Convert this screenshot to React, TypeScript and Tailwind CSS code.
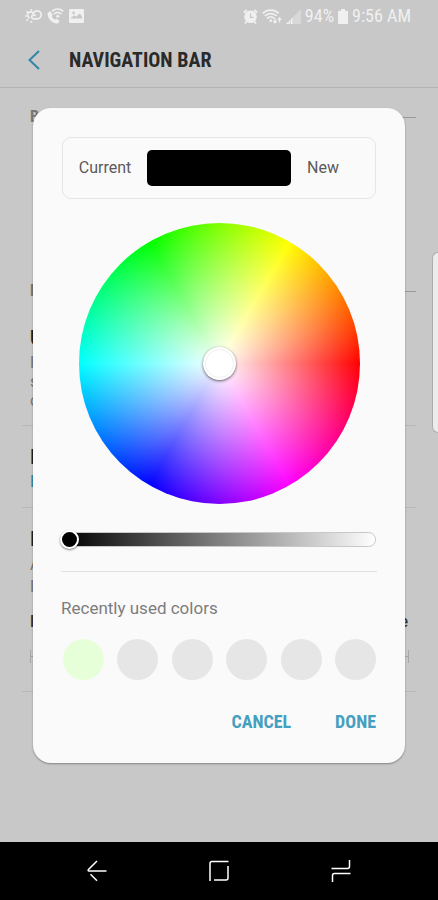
import React, { useState } from 'react';

const RECENT_COLORS = ['#e6ffd9', '#e6e6e6', '#e6e6e6', '#e6e6e6', '#e6e6e6', '#e6e6e6'];

function WeatherIcon() {
  return (
    <svg width="17" height="14" viewBox="0 0 17 14" fill="none" stroke="currentColor" strokeWidth="1.7" aria-hidden="true">
      <path d="M8.4 4.6A3.1 3.1 0 1 0 4.8 9" />
      <path d="M8.2 5.4A4 4 0 1 1 12.2 9.8H8.6A2 2 0 1 1 10.6 7.2" />
      <path d="M6.3 0v1.8M6.3 12v1.8M0 7h1.6M1.5 2.3l1.4 1.3M1.5 11.7l1.4-1.3" />
    </svg>
  );
}

function WifiCallIcon() {
  return (
    <svg width="17" height="16" viewBox="0 0 17 16" fill="none" stroke="currentColor" strokeWidth="1.7" aria-hidden="true">
      <path d="M.6 5L3 3.3l2.900 3.300-1.200 1.700c.8 1.800 1.800 2.700 3.300 3.500l1.800-1.100 2.900 2.600-2 2.200C6 15.900.1 10.800.6 5z" fill="currentColor" stroke="none" />
      <path d="M5 3.4C8.5.4 13 .4 16.3 3.4M7 6c2.200-2 5.200-2 7.400 0" />
      <circle cx="10.7" cy="8.200" r="1.5" fill="currentColor" stroke="none" />
    </svg>
  );
}

function ImageIcon() {
  return (
    <svg width="15" height="14" viewBox="0 0 15 14" fill="currentColor" fillRule="evenodd" aria-hidden="true">
      <path d="M1.300 0h12.400A1.300 1.300 0 0 1 15 1.300v11.400a1.300 1.300 0 0 1-1.300 1.300H1.300A1.300 1.300 0 0 1 0 12.700V1.300A1.300 1.300 0 0 1 1.300 0zM2 9.500h11V7L10.400 4.500 7.300 7.800 5.200 6.200 2 8.800zM4.600 2.600a1.300 1.300 0 1 0 0 2.600 1.300 1.300 0 0 0 0-2.600z" />
    </svg>
  );
}

function AlarmIcon() {
  return (
    <svg width="15" height="15" viewBox="0 0 15 15" fill="none" stroke="currentColor" aria-hidden="true">
      <circle cx="7.5" cy="7.8" r="6.3" fill="currentColor" stroke="none" />
      <path d="M.8 3.5L3.8 1M14.200 3.5L11.2 1M3.5 12.5L2 14.5M11.5 12.5l1.5 2" strokeWidth="1.800" />
      <path d="M7.5 4.5v3.800H10.500" stroke="#c8c8c8" strokeWidth="1.2" />
    </svg>
  );
}

function WifiIcon() {
  return (
    <svg width="20" height="15" viewBox="0 0 20 15" fill="none" stroke="currentColor" strokeWidth="1.700" aria-hidden="true">
      <path d="M.7 4.3c4.6-4.2 11.4-4.2 16 0M2.800 7c3.400-3.200 8.400-3.200 11.800 0M5 9.500c2.200-2 5.200-2 7.400 0" />
      <circle cx="8.700" cy="11.700" r="1.400" fill="currentColor" stroke="none" />
      <path d="M13 9.500v4.500M11.300 12l1.700 1.900 1.700-1.900M17.500 13.500V9M15.800 10.900l1.700-1.900 1.700 1.900" strokeWidth="1.300" />
    </svg>
  );
}

function SignalIcon() {
  return (
    <svg width="15" height="15" viewBox="0 0 15 15" fill="currentColor" aria-hidden="true">
      <path d="M15 0v15H0z" opacity=".4" />
      <path d="M2.500 12.500V15H0zM4 11v4h-1V12zM6.500 8.500V15H5V10z" />
    </svg>
  );
}

function BatteryIcon() {
  return (
    <svg width="10" height="15" viewBox="0 0 10 15" fill="currentColor" aria-hidden="true">
      <path d="M3 0h4v1.800h2a1 1 0 0 1 1 1V14a1 1 0 0 1-1 1H1a1 1 0 0 1-1-1V2.800a1 1 0 0 1 1-1h2z" />
    </svg>
  );
}

function StatusBar() {
  return (
    <div className="flex h-8 items-center justify-between pr-[27px] pl-[25px] font-['Roboto_Condensed',Roboto,sans-serif] text-lg text-[#f0f0f0]">
      <div className="flex items-center gap-[5px]">
        <WeatherIcon />
        <WifiCallIcon />
        <ImageIcon />
      </div>
      <div className="flex items-center gap-1">
        <AlarmIcon />
        <WifiIcon />
        <SignalIcon />
        <span>94%</span>
        <BatteryIcon />
        <span>9:56 AM</span>
      </div>
    </div>
  );
}

function SectionLabel({ children }: { children: React.ReactNode }) {
  return (
    <div className="flex items-center gap-2 pl-2 font-['Roboto_Condensed',Roboto,sans-serif] text-base leading-5 font-bold text-[#777777]">
      <span>{children}</span>
      <div className="h-px flex-1 bg-[#999999]" />
    </div>
  );
}

function SettingTitle({ children }: { children: React.ReactNode }) {
  return <h2 className="mb-px text-xl leading-7 font-bold text-[#222222]">{children}</h2>;
}

function Settings() {
  return (
    <main className="flex-1 px-[22px] pt-[19px]">
      <SectionLabel>B</SectionLabel>
      <div className="h-[154px]" />
      <SectionLabel>B</SectionLabel>

      <section className="border-b border-[#b8b8b8] pt-[23px] pb-[15px] pl-2">
        <SettingTitle>U</SettingTitle>
        <p className="w-3 text-base leading-[19px] text-[#777777]">H<br />s<br />c</p>
      </section>

      <section className="border-b border-[#b8b8b8] pt-[17px] pb-4 pl-2">
        <SettingTitle>I</SettingTitle>
        <p className="text-base leading-[19px] text-[#2f86a6]">E</p>
      </section>

      <section className="border-b border-[#b8b8b8] pt-[17px] pb-7 pl-2">
        <SettingTitle>I</SettingTitle>
        <p className="w-3 text-base leading-[22px] text-[#777777]">A<br />P</p>
        <div className="mt-[14px] flex justify-between pr-2 text-base leading-5 font-medium text-[#333333]">
          <span>N</span>
          <span>e</span>
        </div>
        <div className="mt-[18px] mr-[7px] flex h-[13px] items-center border-x border-[#a8a8a8]">
          <div className="h-px flex-1 bg-[#a8a8a8]" />
        </div>
      </section>
    </main>
  );
}

function ColorDialog() {
  const [level, setLevel] = useState(0);

  return (
    <div
      role="dialog"
      aria-label="Color picker"
      className="absolute inset-x-[33px] top-[108px] rounded-[18px] bg-[#fafafa] px-[29px] pt-[29px] pb-[29px] shadow-[0_1px_2px_rgba(0,0,0,0.35)]"
    >
      <div className="grid h-[62px] grid-cols-[84px_1fr_84px] items-center rounded-[9px] border border-[#e6e6e6] text-base text-[#5a5a5a]">
        <span className="text-center">Current</span>
        <div className="grid h-9 grid-cols-2 overflow-hidden rounded-[5px]">
          <div className="bg-black" />
          <div className="bg-black" />
        </div>
        <span className="pl-4">New</span>
      </div>

      {/* Hue runs counter-clockwise from red, saturation from the centre out */}
      <div className="mx-auto mt-6 flex aspect-square w-[281px] items-center justify-center rounded-full bg-[radial-gradient(closest-side,#fff,rgba(255,255,255,0)),conic-gradient(from_90deg,#f00,#f0f,#00f,#0ff,#0f0,#ff0,#f00)]">
        <button
          type="button"
          aria-label="Hue and saturation"
          className="flex size-[33px] items-center justify-center rounded-full bg-white shadow-[0_1px_3px_rgba(0,0,0,0.6)]"
        >
          <span className="size-[29px] rounded-full border border-[#f0f0f0]" />
        </button>
      </div>

      <div className="mt-[25px] flex h-5 items-center">
        <input
          type="range"
          aria-label="Brightness"
          min={0}
          max={100}
          value={level}
          onChange={(e) => setLevel(Number(e.target.value))}
          className="h-[15px] w-full appearance-none rounded-full border border-[#c8c8c8] bg-[linear-gradient(to_right,#000,#fff)] bg-origin-border [&::-webkit-slider-thumb]:-ml-[3px] [&::-webkit-slider-thumb]:size-[19px] [&::-webkit-slider-thumb]:appearance-none [&::-webkit-slider-thumb]:rounded-full [&::-webkit-slider-thumb]:border-2 [&::-webkit-slider-thumb]:border-white [&::-webkit-slider-thumb]:bg-black [&::-webkit-slider-thumb]:shadow-[0_1px_2px_rgba(0,0,0,0.5)]"
        />
      </div>

      <div className="-mx-px mt-[22px] h-px bg-[#e0e0e0]" />

      <h3 className="-mx-px mt-6 text-[17px] leading-6 text-[#7d7d7d]">Recently used colors</h3>
      <div className="mt-[19px] flex justify-between pl-px">
        {RECENT_COLORS.map((color, i) => (
          <button
            key={i}
            type="button"
            aria-label={`Recent color ${i + 1}`}
            className="size-[41px] rounded-full"
            style={{ backgroundColor: color }}
          />
        ))}
      </div>

      <div className="mt-[30px] flex justify-end gap-11 font-['Roboto_Condensed',Roboto,sans-serif] text-lg leading-6 font-bold text-[#459fbf]">
        <button type="button">CANCEL</button>
        <button type="button">DONE</button>
      </div>
    </div>
  );
}

function SystemNav() {
  return (
    <nav className="flex h-[58px] items-center justify-center gap-[102px] bg-black text-white">
      <button type="button" aria-label="Back">
        <svg width="20" height="22" viewBox="0 0 20 22" fill="none" stroke="currentColor" strokeWidth="1.5">
          <path d="M10 1L1.5 9.5Q.5 11 2 11H19.5M3.5 14.2L10 20.8" />
        </svg>
      </button>
      <button type="button" aria-label="Home">
        <svg width="20" height="22" viewBox="0 0 20 22" fill="none" stroke="currentColor" strokeWidth="1.5">
          <path d="M1 21V3.5Q1 1.5 3 1.5H19.5M19 6V18Q19 20 17 20H5" />
        </svg>
      </button>
      <button type="button" aria-label="Recent apps">
        <svg width="20" height="22" viewBox="0 0 20 22" fill="none" stroke="currentColor" strokeWidth="1.5">
          <path d="M18.5 0V6.5Q18.5 8.5 16.5 8.5H.5M1.5 22V15.5Q1.5 13.5 3.5 13.5H19.5" />
        </svg>
      </button>
    </nav>
  );
}

export default function App() {
  return (
    <div className="relative flex min-h-screen flex-col overflow-hidden bg-[#c8c8c8] font-[Roboto,sans-serif]">
      <StatusBar />
      <header className="flex h-14 items-center border-b border-[#b4b4b4] pl-7">
        <button type="button" aria-label="Navigate up" className="text-[#2f86a6]">
          <svg width="12" height="20" viewBox="0 0 12 20" fill="none" stroke="currentColor" strokeWidth="2">
            <path d="M11 1L1.5 10 11 19" />
          </svg>
        </button>
        <h1 className="pl-[29px] font-['Roboto_Condensed',Roboto,sans-serif] text-xl font-bold text-[#2a2a2a]">NAVIGATION BAR</h1>
      </header>
      <Settings />
      <SystemNav />

      {/* Edge panel handle */}
      <div className="absolute top-[252px] right-0 h-[181px] w-[6px] rounded-l-[6px] border border-r-0 border-[#adadad] bg-[#ececec]" />
      <ColorDialog />
    </div>
  );
}
